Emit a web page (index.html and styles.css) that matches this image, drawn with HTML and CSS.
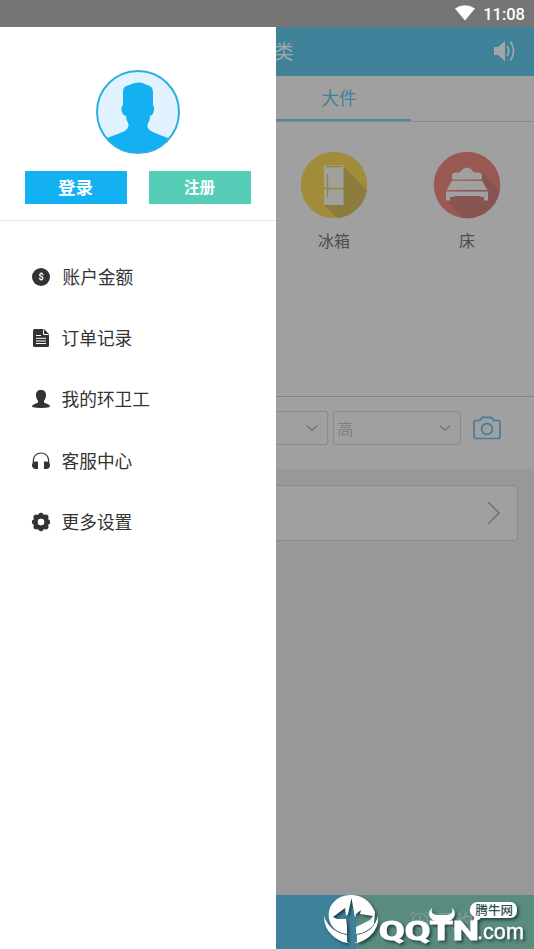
FILE: index.html
```html
<!DOCTYPE html>
<html lang="zh-CN">
<head>
<meta charset="utf-8">
<title>账户</title>
<link rel="stylesheet" href="styles.css">
</head>
<body>
<div class="app">
  <div class="status">
    <svg width="20" height="16" viewBox="0 0 20 16"><path d="M0 3.6Q10-3.2 20 3.6L10 15.6Z" fill="#fff"/></svg>
    <span>11:08</span>
  </div>
  <div class="body">
    <aside class="drawer">
      <div class="profile">
        <svg class="avatar" width="86" height="86" viewBox="0 0 86 86">
          <defs><clipPath id="face"><circle cx="43" cy="43" r="41"/></clipPath></defs>
          <circle cx="43" cy="43" r="41" fill="#e1f3ff"/>
          <path clip-path="url(#face)" fill="#13b1f2" d="M0 86V73L12 69Q23 65 30 62Q35 58 33 54Q31 51 31 47Q27 46 26.500 41Q26 37 28 36V23Q28 17 33 16.500Q38 14 43 13.500Q48 13 52 16Q58 17 58 23V36Q60 38 58.500 43Q58 46 55 47Q55 52 53 54Q51 59 56 62Q64 66 76 70L86 73V86Z"/>
          <circle cx="43" cy="43" r="41" fill="none" stroke="#2bafe2" stroke-width="2"/>
        </svg>
        <div class="actions"><button class="btn login">登录</button><button class="btn register">注册</button></div>
      </div>
      <nav class="menu">
        <a class="item first"><svg width="20" height="20" viewBox="0 0 20 20"><circle cx="10" cy="10" r="9" fill="#333"/><text x="10" y="13.300" class="dollar">$</text></svg><span>账户金额</span></a>
        <a class="item"><svg width="20" height="20" viewBox="0 0 20 20"><path d="M3.500 1H13L18 6V17.500Q18 19 16.500 19H3.500Q2 19 2 17.500V2.500Q2 1 3.500 1Z" fill="#333"/><path d="M12.500 1.500V6.500H17.500M5 7.500H10M5 10.300H15M5 13H15M5 15.500H15" fill="none" stroke="#fff" stroke-width="1"/></svg><span>订单记录</span></a>
        <a class="item"><svg width="20" height="20" viewBox="0 0 20 20"><path d="M10 1C13.500 1 15 3 15 6C15 9 14 10 13 12C12.500 14 14 14.200 17 15.200Q19 16 19 18Q15 19 10 19Q5 19 1 18Q1 16 3 15.200C6 14.200 7.500 14 7 12C6 10 5 9 5 6C5 3 6.500 1 10 1Z" fill="#333"/></svg><span>我的环卫工</span></a>
        <a class="item"><svg width="20" height="20" viewBox="0 0 20 20"><path d="M2.300 12V9.500C2.300 -.5 17.700 -.5 17.700 9.500V12" fill="none" stroke="#333" stroke-width="1.200"/><path d="M7 10.500V18H5Q1 18 1 14.300Q1 10.500 5 10.500ZM13 10.500V18H15Q19 18 19 14.300Q19 10.500 15 10.500Z" fill="#333"/></svg><span>客服中心</span></a>
        <a class="item"><svg width="20" height="20" viewBox="0 0 20 20"><circle cx="10" cy="10" r="5.500" fill="none" stroke="#333" stroke-width="4.500"/><g fill="#333"><circle cx="10" cy="3.500" r="2.700"/><circle cx="14.800" cy="5.200" r="2.700"/><circle cx="16.400" cy="10" r="2.700"/><circle cx="14.800" cy="14.800" r="2.700"/><circle cx="10" cy="16.500" r="2.700"/><circle cx="5.200" cy="14.800" r="2.700"/><circle cx="3.600" cy="10" r="2.700"/><circle cx="5.200" cy="5.200" r="2.700"/></g><circle cx="10" cy="10" r="3.200" fill="#fff"/></svg><span>更多设置</span></a>
      </nav>
    </aside>
    <main class="page">
      <header class="header"><span class="title">类</span>
        <svg width="22" height="22" viewBox="0 0 22 22"><path d="M1 7H5L12 1V21L5 15H1Z" fill="#a2a5a7"/><path d="M14 6Q17.500 11 14 16M17.500 1.500Q23.500 11 17.500 20.500" fill="none" stroke="#a2a5a7" stroke-width="1.700"/></svg>
      </header>
      <div class="tabs"><div class="tab">大件</div></div>
      <section class="goods">
        <div class="good"><svg width="68" height="68" viewBox="0 0 68 68"><defs><clipPath id="disc"><circle cx="34" cy="34" r="33.300"/></clipPath></defs><g clip-path="url(#disc)"><path fill="#a08c3b" d="M0 0H68V68H0Z"/><path fill="#8c7c3d" d="M43 15L68 40V68H38L24 54Z"/></g><path fill="#a0a09c" d="M24 14H43.500V54H24Z"/><path d="M25.500 15.500H42M24 37.500H43.500M27.500 23V46" stroke="#94863c" stroke-width="1.400"/></svg><span>冰箱</span></div>
        <div class="good"><svg width="68" height="68" viewBox="0 0 68 68"><g clip-path="url(#disc)"><path fill="#995852" d="M0 0H68V68H0Z"/><path fill="#885450" d="M48 21L74 47V68H31L14 49Z"/></g><path fill="#a19f9f" d="M19 28.500V24Q19 21.500 23 21.500H26Q28 21 30 18Q34 15 38 18Q40 21 42 21.500H45Q49 21.500 49 24V28.500ZM19 29.700H49L54.500 39H13.500ZM13 40.500H55V49.500H51V46H48L46 45H22L20 46H17V49.500H13Z"/></svg><span>床</span></div>
      </section>
      <section class="sizes">
        <div class="select width"><svg width="12" height="8" viewBox="0 0 12 8"><path d="M1 1.500L6 6.500L11 1.500"/></svg></div>
        <div class="select height"><span>高</span><svg width="12" height="8" viewBox="0 0 12 8"><path d="M1 1.500L6 6.500L11 1.500"/></svg></div>
        <svg class="camera" width="28" height="24" viewBox="0 0 28 24"><path d="M3 4.500H6.500L9.500 1.300H18L21 4.500H25Q27 4.500 27 6.500V20.500Q27 22.500 25 22.500H3Q1 22.500 1 20.500V6.500Q1 4.500 3 4.500Z"/><circle cx="14" cy="13" r="5.400"/></svg>
      </section>
      <section class="address">
        <div class="card"><svg width="14" height="24" viewBox="0 0 14 24"><path d="M1 1L12 12L1 23"/></svg></div>
      </section>
      <footer class="bottom"><div class="left"></div><div class="reserve"><svg width="20" height="20" viewBox="0 0 20 20"><circle cx="10" cy="11" r="7.500"/><path d="M10 6V11H14M1 6Q1 2 5 2M19 6Q19 2 15 2M4 17L2 19M16 17L18 19"/></svg><span>预约</span></div></footer>
    </main>
  </div>
  <svg class="mark" width="214" height="64" viewBox="0 0 214 64">
    <g class="shadow">
      <path fill="#fff" fill-rule="evenodd" d="M31 10C43 10 51 17 55 27L54 39Q50 45 42 48L36 49V42L50 35L53 31L40 29L41 25L36 29L35 33L31.500 13L28 29L26 31L25 23L13 32L17 34L26 34L27 41V49C18 48 12 43 10 37C5 22 16 10 31 10Z"/>
      <path fill="#fff" d="M4 31C8 42 16 48 27 50V57Q32 60 37 57V50C48 48 55 42 58 31Q59 43 50 51C38 62 22 60 12 50Q4 43 4 31Z"/>
      <path fill="#fff" d="M112 23C106 28 110 36 117 36H127C134 36 138 28 132 23Q134 29 127 30H117Q110 29 112 23Z"/>
      <text x="59" y="55" class="brand" textLength="100" lengthAdjust="spacingAndGlyphs">QQTN</text>
      <text x="157" y="54" class="domain" textLength="47" lengthAdjust="spacingAndGlyphs">.com</text>
      <path fill="#fff" d="M158 17H190Q197 17 197 25Q197 33 190 33H161Q158 36 152 37Q155 34 154 32Q149 29 150 24Q151 17 158 17Z"/>
    </g>
    <text x="155.500" y="30" class="site">腾牛网</text>
  </svg>
</div>
</body>
</html>
```
FILE: styles.css
```css
* { box-sizing: border-box; }
body { margin: 0; font-family: Roboto, "Noto Sans CJK SC", sans-serif; }
svg { display: block; flex-shrink: 0; }
.app { position: relative; width: 534px; height: 949px; overflow: hidden; display: flex; flex-direction: column; }
.status { height: 27px; background: #757575; color: #fff; display: flex; align-items: center; justify-content: flex-end; gap: 8px; padding: 1px 9px 0 0; font-size: 16.5px; font-weight: 500; }
.status svg { margin-top: -2px; }
.body { flex: 1; display: flex; min-height: 0; }
.drawer { width: 276px; background: #fff; }
.profile { height: 194px; padding-top: 42px; border-bottom: 1px solid #e5e5e5; }
.avatar { margin: 0 auto; }
.actions { display: flex; gap: 22px; padding: 16px 0 0 25px; }
.btn { width: 102px; height: 33px; padding: 0 1px 0 0; border: 0; color: #fff; font-family: inherit; font-weight: 700; line-height: 35px; }
.login { background: #13b1f2; font-size: 17.5px; }
.register { background: #56ceb7; font-size: 15.5px; }
.menu { padding: 25px 0 0 31px; }
.item { height: 61.3px; display: flex; align-items: center; gap: 10.5px; color: #333; font-size: 17.7px; }
.item span { margin-top: -2px; }
.first { gap: 11.5px; }
.dollar { fill: #fff; font-size: 9px; font-weight: 700; text-anchor: middle; }
.page { width: 258px; background: #a0a0a0; display: flex; flex-direction: column; overflow: hidden; }
.header { height: 49px; background: #41829b; color: #a2a8aa; display: flex; align-items: center; justify-content: space-between; padding: 0 19px 2px 0; font-size: 19px; }
.title { margin-left: -1.5px; }
.tabs { height: 46px; border-bottom: 1px solid #898989; }
.tab { width: 135px; height: 45px; border-bottom: 2px solid #4a89a3; padding-right: 9px; color: #3f829d; font-size: 17.7px; line-height: 46px; text-align: center; }
.goods { height: 275px; border-bottom: 1px solid #828282; display: flex; gap: 65px; padding: 29px 0 0 24px; }
.good { width: 68px; display: flex; flex-direction: column; align-items: center; gap: 11px; color: #4d4d4d; font-size: 16px; line-height: 24px; }
.sizes { height: 72px; display: flex; align-items: flex-start; padding-top: 14px; }
.select { height: 34px; border: 1px solid #8b8b8b; border-radius: 3px; display: flex; align-items: center; justify-content: space-between; padding: 0 9px 0 4px; color: #828282; font-size: 16px; }
.select path { fill: none; stroke: #707070; stroke-width: 1.2; }
.width { width: 51.5px; border-left: 0; border-radius: 0 3px 3px 0; justify-content: flex-end; }
.height { width: 128.5px; margin-left: 5px; }
.camera { margin: 5px 0 0 11.5px; fill: none; stroke: #437c9c; stroke-width: 1.7; }
.address { flex: 1; background: #98989b; padding-top: 16px; }
.card { width: 241.5px; height: 56px; background: #a0a0a0; border: 1px solid #8a8a8b; border-left: 0; border-radius: 0 4px 4px 0; display: flex; align-items: center; justify-content: flex-end; padding-right: 16px; }
.card path { fill: none; stroke: #707070; stroke-width: 1.5; }
.bottom { height: 54px; display: flex; }
.left { width: 80px; background: #3e819b; }
.reserve { flex: 1; background: #598b80; display: flex; align-items: center; gap: 7px; padding: 0 0 4px 54px; color: #8a9c98; font-size: 18px; }
.reserve svg { fill: none; stroke: #8a9c98; stroke-width: 1.2; }
.mark { position: absolute; left: 320px; bottom: 0; }
.shadow { filter: drop-shadow(2px 2px 1.5px rgba(10, 35, 35, .65)); }
.brand { fill: #fff; stroke: #fff; stroke-width: 1; font: 700 25px Roboto, sans-serif; }
.domain { fill: #fff; font: 400 22px "Liberation Sans", sans-serif; stroke: #fff; stroke-width: .4; }
.site { fill: #28504c; font: 500 12.5px "Noto Sans CJK SC", sans-serif; }
```
